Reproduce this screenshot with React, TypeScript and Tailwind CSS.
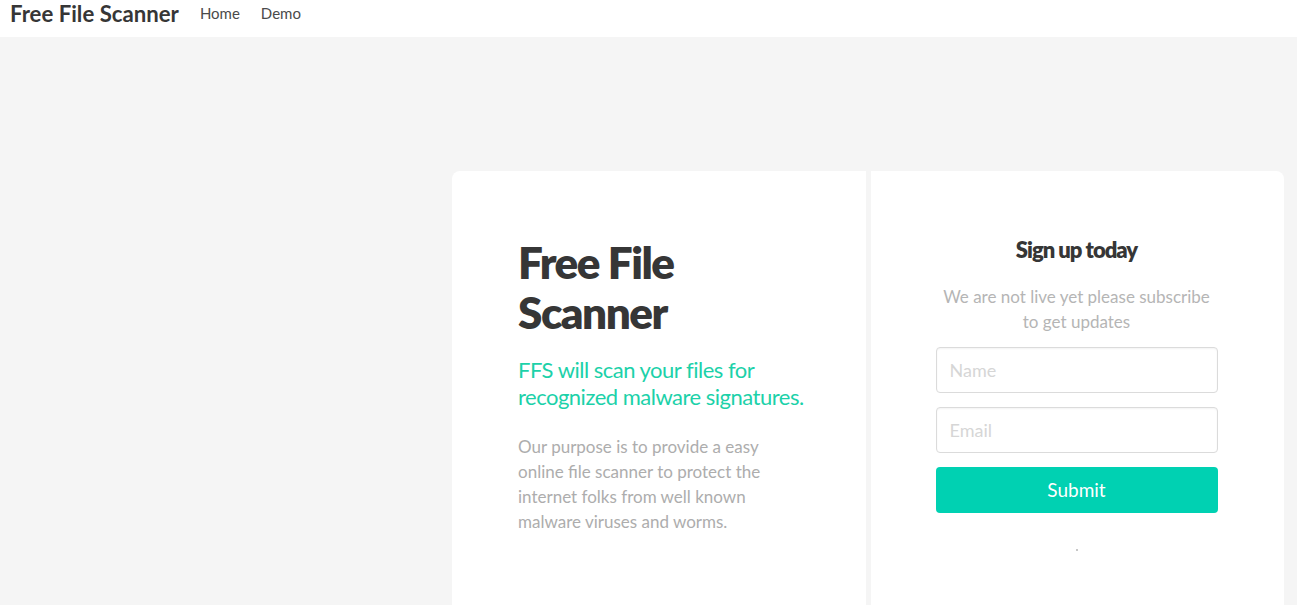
import React from "react";

export default function App() {
  return (
    <div className="min-h-[605px] bg-[#f5f5f5] font-['Lato','Noto_Sans',sans-serif] text-[#363636] overflow-hidden h-[605px]">
      <nav className="h-[37px] bg-white flex items-start pl-[10px] pt-[1px]">
        <span className="text-[22.2px] font-bold text-[#363636] leading-[26px]">Free File Scanner</span>
        <a className="ml-[21px] mt-[2px] text-[15px] leading-[20px] text-[#4a4a4a]">Home</a>
        <a className="ml-[21px] mt-[2px] text-[15px] leading-[20px] text-[#4a4a4a]">Demo</a>
      </nav>
      <div className="flex pl-[452px] pr-[13px] pt-[134px] gap-[5px]">
        <div className="w-[414px] h-[434px] bg-white rounded-tl-[8px] pl-[66px] pt-[66px]">
          <h1 className="text-[44px] font-extrabold leading-[50px] tracking-[-1.5px] w-[282px] text-[#363636]">
            Free File Scanner
          </h1>
          <h2 className="mt-[19px] text-[22px] leading-[27px] text-[#1cd1a9] w-[290px] tracking-[-0.5px]">
            FFS will scan your files for recognized malware signatures.
          </h2>
          <p className="mt-[24px] text-[17px] leading-[25px] text-[#adadad] w-[262px]">
            Our purpose is to provide a easy online file scanner to protect the internet folks from well known malware viruses and worms.
          </p>
        </div>
        <div className="w-[413px] h-[434px] bg-white rounded-tr-[8px] pl-[64px] pr-[66px] pt-[65px] flex flex-col items-center">
          <h3 className="text-[22px] font-extrabold leading-[28px] tracking-[-1px] text-[#363636]">Sign up today</h3>
          <p className="mt-[20px] text-[17px] leading-[25px] text-[#b5b5b5] text-center w-[282px]">
            We are not live yet please subscribe to get updates
          </p>
          <input
            placeholder="Name"
            className="mt-[13px] w-[282px] h-[46px] border border-[#dbdbdb] rounded-[4px] px-[13px] text-[18px] placeholder:text-[#d6d6d6] outline-none shadow-[inset_0_1px_2px_rgba(10,10,10,0.05)]"
          />
          <input
            placeholder="Email"
            className="mt-[14px] w-[282px] h-[46px] border border-[#dbdbdb] rounded-[4px] px-[13px] text-[18px] placeholder:text-[#d6d6d6] outline-none shadow-[inset_0_1px_2px_rgba(10,10,10,0.05)]"
          />
          <button className="mt-[14px] w-[282px] h-[46px] rounded-[4px] bg-[#00d1b2] text-white text-[19px]">
            Submit
          </button>
          <span className="mt-[36px] w-[2px] h-[2px] rounded-full bg-[#b5b5b5]" />
        </div>
      </div>
    </div>
  );
}
